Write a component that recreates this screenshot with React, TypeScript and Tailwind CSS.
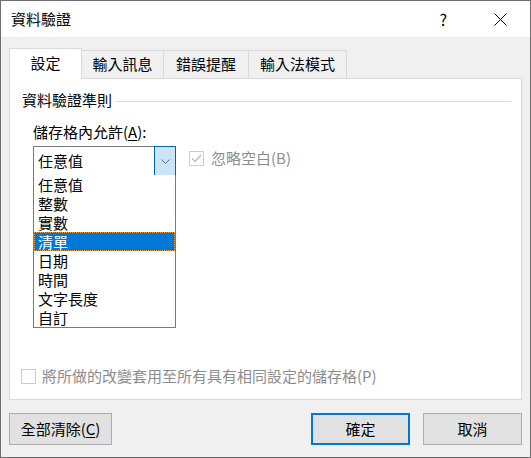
const items = ["任意值", "整數", "實數", "清單", "日期", "時間", "文字長度", "自訂"];

function Tab({ label, active }: { label: string; active?: boolean }) {
    if (active) {
        return (
            <div className="relative z-10 -mb-px h-[31px] w-[73px] bg-white border border-b-0 border-[#d9d9d9] flex items-center justify-center pb-[2px]">
                {label}
            </div>
        );
    }
    return (
        <div className="-ml-px h-[28px] border border-b-0 border-[#d9d9d9] bg-[#f0f0f0] flex items-center justify-center pb-[1px]">
            {label}
        </div>
    );
}

function App() {
    return (
        <div className="w-[531px] h-[458px] border border-[#6e6e6e] bg-[#f0f0f0] flex flex-col text-[15px] leading-[20px] text-black font-['Noto_Sans_CJK_TC','Noto_Sans',sans-serif]">
            {/* title bar */}
            <div className="h-[36px] bg-white flex items-center pl-[10px]">
                <span>資料驗證</span>
                <div className="flex-1" />
                <span className="text-[16px]">?</span>
                <svg className="ml-[47px] mr-[23px]" width="13" height="13" viewBox="0 0 13 13">
                    <path d="M0.5 0.5 L12.5 12.5 M12.5 0.5 L0.5 12.5" stroke="#000" strokeWidth="1" fill="none" />
                </svg>
            </div>

            <div className="px-[8px] pt-[11px]">
                <div className="flex items-end h-[30px]">
                    <Tab label="設定" active />
                    <div className="w-[82px]"><Tab label="輸入訊息" /></div>
                    <div className="w-[85px]"><Tab label="錯誤提醒" /></div>
                    <div className="w-[98px]"><Tab label="輸入法模式" /></div>
                </div>

                <div className="h-[322px] bg-white border border-[#d9d9d9] flex flex-col">
                    <div className="mt-[11px] pl-[12px] pr-[10px] flex items-center h-[20px]">
                        <span>資料驗證準則</span>
                        <div className="flex-1 ml-[3px] mt-[2px] h-px bg-[#dcdcdc]" />
                    </div>

                    <div className="mt-[12px] pl-[23px] h-[20px]">
                        儲存格內<span>允許</span>(<span className="underline underline-offset-2">A</span>):
                    </div>

                    <div className="mt-[4px] pl-[23px] flex items-start">
                        <div className="relative w-[143px] h-[30px] border border-[#7a7a7a] bg-white flex items-center pl-[4px]">
                            <span>任意值</span>
                            <div className="absolute -top-px -right-px -bottom-px w-[22px] border border-[#0063b1] bg-[#cce4f7] flex items-center justify-center">
                                <svg width="9" height="5" viewBox="0 0 9 5">
                                    <path d="M0.5 0.5 L4.5 4.5 L8.5 0.5" stroke="#5d6b7a" strokeWidth="1" fill="none" />
                                </svg>
                            </div>
                            <div className="absolute left-[-1px] top-full w-[143px] border border-t-0 border-[#7a7a7a] bg-white z-20">
                                {items.map((it) =>
                                    it === "清單" ? (
                                        <div key={it} className="h-[19px] leading-[17px] bg-[#0078d7] text-white border border-dotted border-[#e8a04a] pl-[3px]">
                                            {it}
                                        </div>
                                    ) : (
                                        <div key={it} className="h-[19px] leading-[19px] pl-[4px]">
                                            {it}
                                        </div>
                                    )
                                )}
                            </div>
                        </div>

                        <div className="ml-[13px] mt-[2px] flex items-center h-[20px] text-[#8c8c8c]">
                            <div className="w-[15px] h-[15px] border border-[#cccccc] bg-white flex items-center justify-center">
                                <svg width="11" height="9" viewBox="0 0 11 9">
                                    <path d="M1 4.5 L4 7.5 L10 1" stroke="#b5b5b5" strokeWidth="1.2" fill="none" />
                                </svg>
                            </div>
                            <span className="ml-[7px]">忽略空白(B)</span>
                        </div>
                    </div>

                    <div className="mt-auto mb-[13px] pl-[11px] flex items-center h-[20px] text-[#8c8c8c]">
                        <div className="w-[15px] h-[15px] border border-[#cccccc] bg-white" />
                        <span className="ml-[6px]">將所做的改變套用至所有具有相同設定的儲存格(P)</span>
                    </div>
                </div>
            </div>

            <div className="mt-[13px] px-[8px] flex items-start">
                <div className="w-[103px] h-[32px] border border-[#adadad] bg-[#e1e1e1] flex items-center justify-center">
                    全部清除(<span className="underline underline-offset-2">C</span>)
                </div>
                <div className="flex-1" />
                <div className="w-[99px] h-[32px] border-2 border-[#0078d7] bg-[#e1e1e1] flex items-center justify-center">
                    確定
                </div>
                <div className="ml-[13px] w-[99px] h-[32px] border border-[#adadad] bg-[#e1e1e1] flex items-center justify-center">
                    取消
                </div>
            </div>
        </div>
    );
}

export default App;
